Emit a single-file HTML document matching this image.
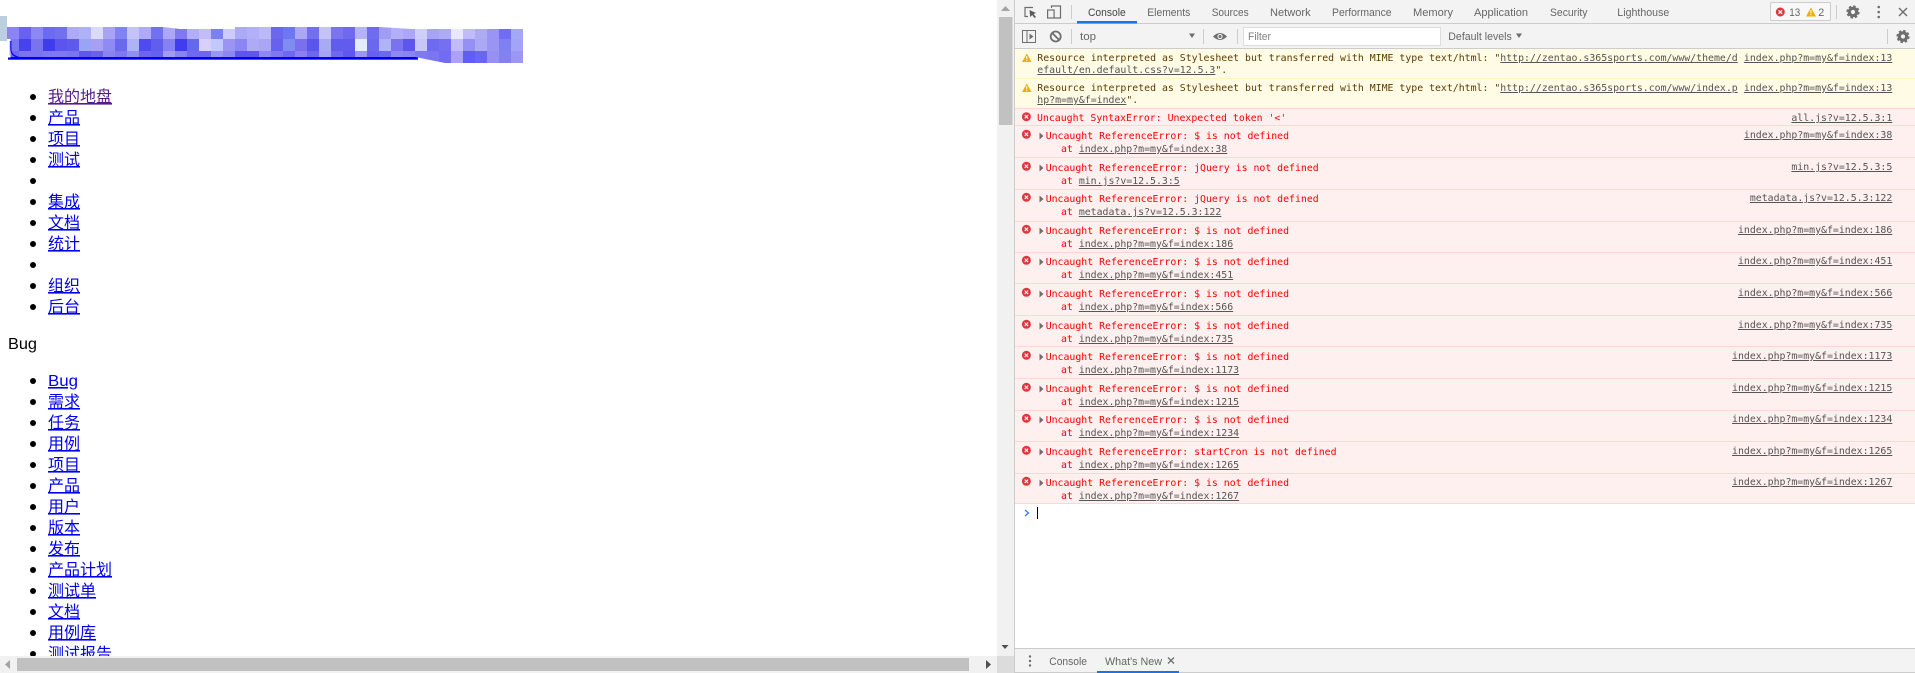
<!DOCTYPE html>
<html lang="zh"><head><meta charset="utf-8"><title>Console</title>
<style>
html,body{margin:0;padding:0;width:1915px;height:673px;overflow:hidden;background:#fff}
svg{display:block}
text{white-space:pre}
.l{font:16px "Liberation Sans","Noto Sans CJK SC",sans-serif;fill:#00e;text-decoration:underline}
.u{font:11px "Liberation Sans",sans-serif;fill:#666}
.m{font:9.87px "DejaVu Sans Mono",monospace}
.w{fill:#5c3c00}.e{fill:#f00}
.a{fill:#545454;text-decoration:underline}
</style></head><body>
<svg width="1915" height="673" viewBox="0 0 1915 673" xmlns="http://www.w3.org/2000/svg">
<defs><clipPath id="mc"><polygon points="7,27 163,27 172,28 180,29 235,29 235,27 380,27 412,29 523,29 523,63 445,63 430,60 415,57 7,57"/></clipPath></defs>
<rect width="1915" height="673" fill="#fff"/>
<rect x="0" y="16" width="7" height="25" fill="#bbcfdf"/>
<rect x="8" y="57" width="410" height="2.7" fill="#0000ee"/>
<g clip-path="url(#mc)">
<g>
<rect x="7" y="27" width="12" height="12" fill="#8b84f2"/><rect x="19" y="27" width="12" height="12" fill="#6763f0"/><rect x="31" y="27" width="12" height="12" fill="#8b88f3"/><rect x="43" y="27" width="12" height="12" fill="#6c6af0"/><rect x="55" y="27" width="12" height="12" fill="#7270ef"/><rect x="67" y="27" width="12" height="12" fill="#aeaaf6"/><rect x="79" y="27" width="12" height="12" fill="#aeb0f8"/><rect x="91" y="27" width="12" height="12" fill="#dcdafb"/><rect x="103" y="27" width="12" height="12" fill="#a9a2f5"/><rect x="115" y="27" width="12" height="12" fill="#7f83f3"/><rect x="127" y="27" width="12" height="12" fill="#c4c2fa"/><rect x="139" y="27" width="12" height="12" fill="#b0aaf6"/><rect x="151" y="27" width="12" height="12" fill="#7271f0"/><rect x="163" y="27" width="12" height="12" fill="#aca8f5"/><rect x="175" y="27" width="12" height="12" fill="#7f78f1"/><rect x="187" y="27" width="12" height="12" fill="#b2aef8"/><rect x="199" y="27" width="12" height="12" fill="#c3bcfa"/><rect x="211" y="27" width="12" height="12" fill="#7c80f4"/><rect x="223" y="27" width="12" height="12" fill="#cdcbfb"/><rect x="235" y="27" width="12" height="12" fill="#aca9f6"/><rect x="247" y="27" width="12" height="12" fill="#b3aff8"/><rect x="259" y="27" width="12" height="12" fill="#bdb9f7"/><rect x="271" y="27" width="12" height="12" fill="#6b68ee"/><rect x="283" y="27" width="12" height="12" fill="#6f76f1"/><rect x="295" y="27" width="12" height="12" fill="#aba7f5"/><rect x="307" y="27" width="12" height="12" fill="#7370f0"/><rect x="319" y="27" width="12" height="12" fill="#c4c2f8"/><rect x="331" y="27" width="12" height="12" fill="#7b74ef"/><rect x="343" y="27" width="12" height="12" fill="#6f69ee"/><rect x="355" y="27" width="12" height="12" fill="#b6b2f8"/><rect x="367" y="27" width="12" height="12" fill="#706cef"/><rect x="379" y="27" width="12" height="12" fill="#9f9cf5"/><rect x="391" y="27" width="12" height="12" fill="#b2aef7"/><rect x="403" y="27" width="12" height="12" fill="#aba7f6"/><rect x="415" y="27" width="12" height="12" fill="#cfcdfa"/><rect x="427" y="27" width="12" height="12" fill="#a7a4f6"/><rect x="439" y="27" width="12" height="12" fill="#adabf7"/><rect x="451" y="27" width="12" height="12" fill="#e9e7fc"/><rect x="463" y="27" width="12" height="12" fill="#bfbcf9"/><rect x="475" y="27" width="12" height="12" fill="#aeabf6"/><rect x="487" y="27" width="12" height="12" fill="#9a94f4"/><rect x="499" y="27" width="12" height="12" fill="#716cf0"/><rect x="511" y="27" width="12" height="12" fill="#a5a8f7"/>
</g>
<g>
<rect x="7" y="39" width="12" height="12" fill="#7b76f1"/><rect x="19" y="39" width="12" height="12" fill="#4741f0"/><rect x="31" y="39" width="12" height="12" fill="#7a73f0"/><rect x="43" y="39" width="12" height="12" fill="#3f3cf0"/><rect x="55" y="39" width="12" height="12" fill="#5c54ee"/><rect x="67" y="39" width="12" height="12" fill="#6059ee"/><rect x="79" y="39" width="12" height="12" fill="#9aa4f6"/><rect x="91" y="39" width="12" height="12" fill="#a89ff4"/><rect x="103" y="39" width="12" height="12" fill="#8f8bf2"/><rect x="115" y="39" width="12" height="12" fill="#6a68ef"/><rect x="127" y="39" width="12" height="12" fill="#aeb3f8"/><rect x="139" y="39" width="12" height="12" fill="#4f4bf1"/><rect x="151" y="39" width="12" height="12" fill="#625eed"/><rect x="163" y="39" width="12" height="12" fill="#8680f0"/><rect x="175" y="39" width="12" height="12" fill="#423cef"/><rect x="187" y="39" width="12" height="12" fill="#6468ef"/><rect x="199" y="39" width="12" height="12" fill="#d8cffa"/><rect x="211" y="39" width="12" height="12" fill="#c0c8fc"/><rect x="223" y="39" width="12" height="12" fill="#9c94f2"/><rect x="235" y="39" width="12" height="12" fill="#8b86f1"/><rect x="247" y="39" width="12" height="12" fill="#aeaaf6"/><rect x="259" y="39" width="12" height="12" fill="#aba5f4"/><rect x="271" y="39" width="12" height="12" fill="#6661ee"/><rect x="283" y="39" width="12" height="12" fill="#7f8cf0"/><rect x="295" y="39" width="12" height="12" fill="#7a70ef"/><rect x="307" y="39" width="12" height="12" fill="#5a55ed"/><rect x="319" y="39" width="12" height="12" fill="#a8aaf6"/><rect x="331" y="39" width="12" height="12" fill="#625cee"/><rect x="343" y="39" width="12" height="12" fill="#625bee"/><rect x="355" y="39" width="12" height="12" fill="#e4ebfc"/><rect x="367" y="39" width="12" height="12" fill="#6c68ee"/><rect x="379" y="39" width="12" height="12" fill="#aeb4f7"/><rect x="391" y="39" width="12" height="12" fill="#7a72ee"/><rect x="403" y="39" width="12" height="12" fill="#5c55ee"/><rect x="415" y="39" width="12" height="12" fill="#c6c6f8"/><rect x="427" y="39" width="12" height="12" fill="#6d6cf0"/><rect x="439" y="39" width="12" height="12" fill="#7570f2"/><rect x="451" y="39" width="12" height="12" fill="#c1bcf8"/><rect x="463" y="39" width="12" height="12" fill="#9590f3"/><rect x="475" y="39" width="12" height="12" fill="#aba8f6"/><rect x="487" y="39" width="12" height="12" fill="#9a94f3"/><rect x="499" y="39" width="12" height="12" fill="#7f80f2"/><rect x="511" y="39" width="12" height="12" fill="#a3a4f6"/>
</g>
<g>
<rect x="7" y="51" width="12" height="12" fill="#7167ef"/><rect x="19" y="51" width="12" height="12" fill="#7a74f0"/><rect x="31" y="51" width="12" height="12" fill="#7a74f0"/><rect x="43" y="51" width="12" height="12" fill="#8078f0"/><rect x="55" y="51" width="12" height="12" fill="#8078f0"/><rect x="67" y="51" width="12" height="12" fill="#7a74f0"/><rect x="79" y="51" width="12" height="12" fill="#6058ee"/><rect x="91" y="51" width="12" height="12" fill="#6a62ee"/><rect x="103" y="51" width="12" height="12" fill="#8a84f0"/><rect x="115" y="51" width="12" height="12" fill="#8078f0"/><rect x="127" y="51" width="12" height="12" fill="#9090f0"/><rect x="139" y="51" width="12" height="12" fill="#6e64ee"/><rect x="151" y="51" width="12" height="12" fill="#6560ee"/><rect x="163" y="51" width="12" height="12" fill="#a09cf0"/><rect x="175" y="51" width="12" height="12" fill="#8a84f0"/><rect x="187" y="51" width="12" height="12" fill="#7068ee"/><rect x="199" y="51" width="12" height="12" fill="#6f68ee"/><rect x="211" y="51" width="12" height="12" fill="#9b96f0"/><rect x="223" y="51" width="12" height="12" fill="#8d88f0"/><rect x="235" y="51" width="12" height="12" fill="#5f56ee"/><rect x="247" y="51" width="12" height="12" fill="#5f56ee"/><rect x="259" y="51" width="12" height="12" fill="#9088f2"/><rect x="271" y="51" width="12" height="12" fill="#7f78f0"/><rect x="283" y="51" width="12" height="12" fill="#7068ee"/><rect x="295" y="51" width="12" height="12" fill="#8a80f0"/><rect x="307" y="51" width="12" height="12" fill="#6e66ee"/><rect x="319" y="51" width="12" height="12" fill="#a6a4f4"/><rect x="331" y="51" width="12" height="12" fill="#7068ee"/><rect x="343" y="51" width="12" height="12" fill="#6058ee"/><rect x="355" y="51" width="12" height="12" fill="#9c96f2"/><rect x="367" y="51" width="12" height="12" fill="#6860ee"/><rect x="379" y="51" width="12" height="12" fill="#6c68f2"/><rect x="391" y="51" width="12" height="12" fill="#9088f2"/><rect x="403" y="51" width="12" height="12" fill="#8a84f2"/><rect x="415" y="51" width="12" height="12" fill="#807af0"/><rect x="427" y="51" width="12" height="12" fill="#7c74f0"/><rect x="439" y="51" width="12" height="12" fill="#726cf2"/><rect x="451" y="51" width="12" height="12" fill="#aba2f6"/><rect x="463" y="51" width="12" height="12" fill="#605cf6"/><rect x="475" y="51" width="12" height="12" fill="#6a66f4"/><rect x="487" y="51" width="12" height="12" fill="#9690f4"/><rect x="499" y="51" width="12" height="12" fill="#8480f2"/><rect x="511" y="51" width="12" height="12" fill="#9c96f4"/>
</g>
</g>
<rect x="7" y="39" width="3.5" height="18.5" fill="#fff"/>
<rect x="9.3" y="41" width="0.8" height="14" fill="#f0b0e0"/>
<path d="M10.800 41V49Q10.800 57.500 24 58" fill="none" stroke="#0000ee" stroke-width="1.200"/>

<g fill="#000">
<circle cx="33" cy="97" r="3"/><circle cx="33" cy="118" r="3"/><circle cx="33" cy="139" r="3"/><circle cx="33" cy="160" r="3"/><circle cx="33" cy="181" r="3"/><circle cx="33" cy="202" r="3"/><circle cx="33" cy="223" r="3"/><circle cx="33" cy="244" r="3"/><circle cx="33" cy="265" r="3"/><circle cx="33" cy="286" r="3"/><circle cx="33" cy="307" r="3"/>
<circle cx="33" cy="381" r="3"/><circle cx="33" cy="402" r="3"/><circle cx="33" cy="423" r="3"/><circle cx="33" cy="444" r="3"/><circle cx="33" cy="465" r="3"/><circle cx="33" cy="486" r="3"/><circle cx="33" cy="507" r="3"/><circle cx="33" cy="528" r="3"/><circle cx="33" cy="549" r="3"/><circle cx="33" cy="570" r="3"/><circle cx="33" cy="591" r="3"/><circle cx="33" cy="612" r="3"/><circle cx="33" cy="633" r="3"/><circle cx="33" cy="654" r="3"/>
</g>
<text class="l" x="48" y="102" style="fill:#551a8b">我的地盘</text>
<text class="l" x="48" y="123">产品</text>
<text class="l" x="48" y="144">项目</text>
<text class="l" x="48" y="165">测试</text>
<text class="l" x="48" y="207">集成</text>
<text class="l" x="48" y="228">文档</text>
<text class="l" x="48" y="249">统计</text>
<text class="l" x="48" y="291">组织</text>
<text class="l" x="48" y="312">后台</text>
<text x="8" y="349" textLength="29" lengthAdjust="spacingAndGlyphs" style="font:16px 'Liberation Sans',sans-serif;fill:#000">Bug</text>
<text class="l" x="48" y="386" textLength="30" lengthAdjust="spacingAndGlyphs">Bug</text>
<text class="l" x="48" y="407">需求</text>
<text class="l" x="48" y="428">任务</text>
<text class="l" x="48" y="449">用例</text>
<text class="l" x="48" y="470">项目</text>
<text class="l" x="48" y="491">产品</text>
<text class="l" x="48" y="512">用户</text>
<text class="l" x="48" y="533">版本</text>
<text class="l" x="48" y="554">发布</text>
<text class="l" x="48" y="575">产品计划</text>
<text class="l" x="48" y="596">测试单</text>
<text class="l" x="48" y="617">文档</text>
<text class="l" x="48" y="638">用例库</text>
<text class="l" x="48" y="659">测试报告</text>

<!-- page scrollbars -->
<rect x="0" y="656" width="997" height="17" fill="#f1f1f1"/>
<rect x="17" y="658" width="952" height="13" fill="#c1c1c1"/>
<path d="M5 664.500l5-4.500v9z" fill="#a3a3a3"/>
<path d="M986 660l5 4.500-5 4.500z" fill="#505050"/>
<rect x="997" y="0" width="17" height="656" fill="#f1f1f1"/>
<rect x="999" y="17" width="13.500" height="108" fill="#c1c1c1"/>
<path d="M1001 11l4.500-5 4.500 5z" fill="#a3a3a3"/>
<path d="M1001.500 645h7l-3.500 4z" fill="#505050"/>
<rect x="997" y="656" width="17" height="17" fill="#dcdcdc"/>
<rect x="1014" y="0" width="1" height="673" fill="#ccc"/>

<!-- devtools top bar -->
<rect x="1015" y="0" width="900" height="23" fill="#f3f3f3"/>
<rect x="1015" y="23" width="900" height="1" fill="#ccc"/>
<rect x="1015" y="24" width="900" height="24" fill="#f3f3f3"/>
<rect x="1015" y="48" width="900" height="1" fill="#ccc"/>
<rect x="1077" y="21" width="60" height="2.500" fill="#1a73e8"/>
<!-- inspect -->
<path d="M1033 7.500h-8v9h3" fill="none" stroke="#6e6e6e" stroke-width="1.200"/>
<path d="M1029.500 10l6.500 3-2.500 1 2.500 3-1.500 1-2.300-3-2 2z" fill="#5a5a5a"/>
<!-- device -->
<path d="M1051.500 8V6h9v12h-6" fill="none" stroke="#6e6e6e" stroke-width="1.200"/>
<rect x="1047.600" y="10" width="6.500" height="8" fill="none" stroke="#6e6e6e" stroke-width="1.200"/>
<rect x="1071" y="5" width="1" height="14" fill="#ccc"/>
<text class="u" x="1088" y="16" textLength="37.700" lengthAdjust="spacingAndGlyphs" style="fill:#444">Console</text>
<text class="u" x="1147.300" y="16" textLength="43" lengthAdjust="spacingAndGlyphs">Elements</text>
<text class="u" x="1211.700" y="16" textLength="37" lengthAdjust="spacingAndGlyphs">Sources</text>
<text class="u" x="1270" y="16" textLength="40.600" lengthAdjust="spacingAndGlyphs">Network</text>
<text class="u" x="1332" y="16" textLength="59.600" lengthAdjust="spacingAndGlyphs">Performance</text>
<text class="u" x="1413" y="16" textLength="40" lengthAdjust="spacingAndGlyphs">Memory</text>
<text class="u" x="1474" y="16" textLength="54" lengthAdjust="spacingAndGlyphs">Application</text>
<text class="u" x="1550" y="16" textLength="37.500" lengthAdjust="spacingAndGlyphs">Security</text>
<text class="u" x="1617.300" y="16" textLength="52" lengthAdjust="spacingAndGlyphs">Lighthouse</text>
<!-- badge -->
<rect x="1770.500" y="2.500" width="60" height="18" rx="1" fill="#f8f8f8" stroke="#ccc"/>
<circle cx="1780.300" cy="12" r="4.500" fill="#d93a3e"/>
<path d="M1778.500 10.200l3.600 3.600m0-3.600l-3.600 3.600" stroke="#fff" stroke-width="1.100"/>
<text class="u" x="1789.300" y="16" textLength="11" lengthAdjust="spacingAndGlyphs">13</text>
<path d="M1811 7.500l5 9h-10z" fill="#eab000"/><rect x="1810.500" y="10" width="1" height="3.500" fill="#fff"/><rect x="1810.500" y="14.300" width="1" height="1" fill="#fff"/>
<text class="u" x="1818.300" y="16" textLength="6" lengthAdjust="spacingAndGlyphs">2</text>
<rect x="1836" y="5" width="1" height="14" fill="#ccc"/>
<!-- gear top -->
<g transform="translate(1853 12)"><circle r="3.700" fill="none" stroke="#6e6e6e" stroke-width="3.200"/><circle r="5.500" fill="none" stroke="#6e6e6e" stroke-width="2.200" stroke-dasharray="2.400 1.920"/></g>
<g fill="#6e6e6e"><circle cx="1878.700" cy="7" r="1.300"/><circle cx="1878.700" cy="12" r="1.300"/><circle cx="1878.700" cy="17" r="1.300"/></g>
<path d="M1899 8l8 8m0-8l-8 8" stroke="#6e6e6e" stroke-width="1.400"/>

<!-- console toolbar -->
<rect x="1022.500" y="30.500" width="13" height="12" fill="none" stroke="#6e6e6e"/>
<rect x="1026.500" y="31" width="1" height="11" fill="#6e6e6e"/>
<path d="M1029.500 33.500l4 3-4 3z" fill="#6e6e6e"/>
<circle cx="1055.700" cy="36.500" r="5" fill="none" stroke="#6e6e6e" stroke-width="1.800"/>
<path d="M1052.200 33l7 7" stroke="#6e6e6e" stroke-width="1.800"/>
<rect x="1071" y="29" width="1" height="15" fill="#ccc"/>
<text class="u" x="1080" y="40" textLength="16" lengthAdjust="spacingAndGlyphs">top</text>
<path d="M1189 33.500h6l-3 4.500z" fill="#6e6e6e"/>
<rect x="1203" y="29" width="1" height="15" fill="#ccc"/>
<path d="M1213 36.500q7-7 14 0q-7 7-14 0z" fill="#6e6e6e"/><circle cx="1220" cy="36.500" r="2.600" fill="#f3f3f3"/><circle cx="1220" cy="36.500" r="1.500" fill="#6e6e6e"/>
<rect x="1237" y="29" width="1" height="15" fill="#ccc"/>
<rect x="1243.500" y="27.500" width="197" height="18" fill="#fff" stroke="#ddd"/>
<text class="u" x="1248" y="40" textLength="23" lengthAdjust="spacingAndGlyphs" style="fill:#808080">Filter</text>
<text class="u" x="1448.300" y="40" textLength="63.500" lengthAdjust="spacingAndGlyphs">Default levels</text>
<path d="M1516 33.500h6l-3 4.500z" fill="#6e6e6e"/>
<rect x="1887" y="29" width="1" height="15" fill="#ccc"/>
<g transform="translate(1903 36.500)"><circle r="3.700" fill="none" stroke="#6e6e6e" stroke-width="3.200"/><circle r="5.500" fill="none" stroke="#6e6e6e" stroke-width="2.200" stroke-dasharray="2.400 1.920"/></g>

<!-- warnings -->
<rect x="1015" y="49" width="900" height="59" fill="#fffbe5"/>
<rect x="1015" y="78" width="900" height="1" fill="#fff5c2"/>
<rect x="1015" y="108" width="900" height="1" fill="#ffd6d6"/>
<g><path d="M1026.800 53.500l4.700 8.500h-9.400z" fill="#eab000"/><rect x="1026.300" y="56" width="1" height="3.300" fill="#fff"/><rect x="1026.300" y="60" width="1" height="1" fill="#fff"/></g>
<g transform="translate(0 30)"><path d="M1026.800 53.500l4.700 8.500h-9.400z" fill="#eab000"/><rect x="1026.300" y="56" width="1" height="3.300" fill="#fff"/><rect x="1026.300" y="60" width="1" height="1" fill="#fff"/></g>
<text class="m w" x="1037.300" y="61">Resource interpreted as Stylesheet but transferred with MIME type text/html: "<tspan class="a">http://zentao.s365sports.com/www/theme/d</tspan></text>
<text class="m w" x="1037.300" y="73"><tspan class="a">efault/en.default.css?v=12.5.3</tspan>".</text>
<text class="m a" x="1892.300" y="61" text-anchor="end">index.php?m=my&amp;f=index:13</text>
<text class="m w" x="1037.300" y="91">Resource interpreted as Stylesheet but transferred with MIME type text/html: "<tspan class="a">http://zentao.s365sports.com/www/index.p</tspan></text>
<text class="m w" x="1037.300" y="103"><tspan class="a">hp?m=my&amp;f=index</tspan>".</text>
<text class="m a" x="1892.300" y="91" text-anchor="end">index.php?m=my&amp;f=index:13</text>

<!-- errors -->
<rect x="1015" y="109" width="900" height="394" fill="#fff0f0"/>
<g fill="#ffd6d6">
<rect x="1015" y="125" width="900" height="1"/><rect x="1015" y="157" width="900" height="1"/><rect x="1015" y="189" width="900" height="1"/><rect x="1015" y="221" width="900" height="1"/><rect x="1015" y="252" width="900" height="1"/><rect x="1015" y="283" width="900" height="1"/><rect x="1015" y="315" width="900" height="1"/><rect x="1015" y="346" width="900" height="1"/><rect x="1015" y="378" width="900" height="1"/><rect x="1015" y="410" width="900" height="1"/><rect x="1015" y="441" width="900" height="1"/><rect x="1015" y="473" width="900" height="1"/><rect x="1015" y="503" width="900" height="1"/>
</g>
<!-- error icons -->
<g fill="#d93a3e">
<circle cx="1026.400" cy="116.700" r="4.500"/><circle cx="1026.400" cy="134.300" r="4.500"/><circle cx="1026.400" cy="166.300" r="4.500"/><circle cx="1026.400" cy="197.300" r="4.500"/><circle cx="1026.400" cy="229.300" r="4.500"/><circle cx="1026.400" cy="260.300" r="4.500"/><circle cx="1026.400" cy="292.300" r="4.500"/><circle cx="1026.400" cy="324.300" r="4.500"/><circle cx="1026.400" cy="355.300" r="4.500"/><circle cx="1026.400" cy="387.300" r="4.500"/><circle cx="1026.400" cy="418.300" r="4.500"/><circle cx="1026.400" cy="450.300" r="4.500"/><circle cx="1026.400" cy="481.300" r="4.500"/>
</g>
<g stroke="#fff" stroke-width="1" fill="none">
<path d="M1024.700 115l3.400 3.400m0-3.400l-3.400 3.400"/><path d="M1024.700 132.600l3.400 3.400m0-3.400l-3.400 3.400"/><path d="M1024.700 164.600l3.400 3.400m0-3.400l-3.400 3.400"/><path d="M1024.700 195.600l3.400 3.400m0-3.400l-3.400 3.400"/><path d="M1024.700 227.600l3.400 3.400m0-3.400l-3.400 3.400"/><path d="M1024.700 258.600l3.400 3.400m0-3.400l-3.400 3.400"/><path d="M1024.700 290.600l3.400 3.400m0-3.400l-3.400 3.400"/><path d="M1024.700 322.600l3.400 3.400m0-3.400l-3.400 3.400"/><path d="M1024.700 353.600l3.400 3.400m0-3.400l-3.400 3.400"/><path d="M1024.700 385.600l3.400 3.400m0-3.400l-3.400 3.400"/><path d="M1024.700 416.600l3.400 3.400m0-3.400l-3.400 3.400"/><path d="M1024.700 448.600l3.400 3.400m0-3.400l-3.400 3.400"/><path d="M1024.700 479.600l3.400 3.400m0-3.400l-3.400 3.400"/>
</g>
<!-- expand arrows -->
<g fill="#6e6e6e">
<path d="M1039.500 132.500l4 3.500-4 3.500z"/><path d="M1039.500 164.500l4 3.500-4 3.500z"/><path d="M1039.500 195.500l4 3.500-4 3.500z"/><path d="M1039.500 227.500l4 3.500-4 3.500z"/><path d="M1039.500 258.500l4 3.500-4 3.500z"/><path d="M1039.500 290.500l4 3.500-4 3.500z"/><path d="M1039.500 322.500l4 3.500-4 3.500z"/><path d="M1039.500 353.500l4 3.500-4 3.500z"/><path d="M1039.500 385.500l4 3.500-4 3.500z"/><path d="M1039.500 416.500l4 3.500-4 3.500z"/><path d="M1039.500 448.500l4 3.500-4 3.500z"/><path d="M1039.500 479.500l4 3.500-4 3.500z"/>
</g>
<text class="m e" x="1037" y="121">Uncaught SyntaxError: Unexpected token '&lt;'</text>
<text class="m a" x="1892.300" y="121" text-anchor="end">all.js?v=12.5.3:1</text>

<text class="m e" x="1045.700" y="139">Uncaught ReferenceError: $ is not defined</text>
<text class="m e" x="1061" y="152">at <tspan class="a">index.php?m=my&amp;f=index:38</tspan></text>
<text class="m a" x="1892.300" y="138" text-anchor="end">index.php?m=my&amp;f=index:38</text>

<text class="m e" x="1045.700" y="171">Uncaught ReferenceError: jQuery is not defined</text>
<text class="m e" x="1061" y="184">at <tspan class="a">min.js?v=12.5.3:5</tspan></text>
<text class="m a" x="1892.300" y="170" text-anchor="end">min.js?v=12.5.3:5</text>

<text class="m e" x="1045.700" y="202">Uncaught ReferenceError: jQuery is not defined</text>
<text class="m e" x="1061" y="215">at <tspan class="a">metadata.js?v=12.5.3:122</tspan></text>
<text class="m a" x="1892.300" y="201" text-anchor="end">metadata.js?v=12.5.3:122</text>

<text class="m e" x="1045.700" y="234">Uncaught ReferenceError: $ is not defined</text>
<text class="m e" x="1061" y="247">at <tspan class="a">index.php?m=my&amp;f=index:186</tspan></text>
<text class="m a" x="1892.300" y="233" text-anchor="end">index.php?m=my&amp;f=index:186</text>

<text class="m e" x="1045.700" y="265">Uncaught ReferenceError: $ is not defined</text>
<text class="m e" x="1061" y="278">at <tspan class="a">index.php?m=my&amp;f=index:451</tspan></text>
<text class="m a" x="1892.300" y="264" text-anchor="end">index.php?m=my&amp;f=index:451</text>

<text class="m e" x="1045.700" y="297">Uncaught ReferenceError: $ is not defined</text>
<text class="m e" x="1061" y="310">at <tspan class="a">index.php?m=my&amp;f=index:566</tspan></text>
<text class="m a" x="1892.300" y="296" text-anchor="end">index.php?m=my&amp;f=index:566</text>

<text class="m e" x="1045.700" y="329">Uncaught ReferenceError: $ is not defined</text>
<text class="m e" x="1061" y="342">at <tspan class="a">index.php?m=my&amp;f=index:735</tspan></text>
<text class="m a" x="1892.300" y="328" text-anchor="end">index.php?m=my&amp;f=index:735</text>

<text class="m e" x="1045.700" y="360">Uncaught ReferenceError: $ is not defined</text>
<text class="m e" x="1061" y="373">at <tspan class="a">index.php?m=my&amp;f=index:1173</tspan></text>
<text class="m a" x="1892.300" y="359" text-anchor="end">index.php?m=my&amp;f=index:1173</text>

<text class="m e" x="1045.700" y="392">Uncaught ReferenceError: $ is not defined</text>
<text class="m e" x="1061" y="405">at <tspan class="a">index.php?m=my&amp;f=index:1215</tspan></text>
<text class="m a" x="1892.300" y="391" text-anchor="end">index.php?m=my&amp;f=index:1215</text>

<text class="m e" x="1045.700" y="423">Uncaught ReferenceError: $ is not defined</text>
<text class="m e" x="1061" y="436">at <tspan class="a">index.php?m=my&amp;f=index:1234</tspan></text>
<text class="m a" x="1892.300" y="422" text-anchor="end">index.php?m=my&amp;f=index:1234</text>

<text class="m e" x="1045.700" y="455">Uncaught ReferenceError: startCron is not defined</text>
<text class="m e" x="1061" y="468">at <tspan class="a">index.php?m=my&amp;f=index:1265</tspan></text>
<text class="m a" x="1892.300" y="454" text-anchor="end">index.php?m=my&amp;f=index:1265</text>

<text class="m e" x="1045.700" y="486">Uncaught ReferenceError: $ is not defined</text>
<text class="m e" x="1061" y="499">at <tspan class="a">index.php?m=my&amp;f=index:1267</tspan></text>
<text class="m a" x="1892.300" y="485" text-anchor="end">index.php?m=my&amp;f=index:1267</text>

<!-- prompt -->
<path d="M1025 510l3.500 3-3.500 3" fill="none" stroke="#367cf1" stroke-width="1.300"/>
<rect x="1037" y="507" width="1" height="12" fill="#000"/>

<!-- drawer -->
<rect x="1015" y="648" width="900" height="25" fill="#f3f3f3"/>
<rect x="1015" y="648" width="900" height="1" fill="#ccc"/>
<rect x="1015" y="672" width="900" height="1" fill="#ccc"/>
<g fill="#6e6e6e"><circle cx="1030" cy="656.500" r="1.200"/><circle cx="1030" cy="661" r="1.200"/><circle cx="1030" cy="665.500" r="1.200"/></g>
<text class="u" x="1049.300" y="665" textLength="37.700" lengthAdjust="spacingAndGlyphs">Console</text>
<text class="u" x="1105" y="665" textLength="57" lengthAdjust="spacingAndGlyphs">What's New</text>
<path d="M1168 657.500l6 6m0-6l-6 6" stroke="#6e6e6e" stroke-width="1.300"/>
<rect x="1097" y="671" width="82" height="2" fill="#1a73e8"/>
</svg>
</body></html>
